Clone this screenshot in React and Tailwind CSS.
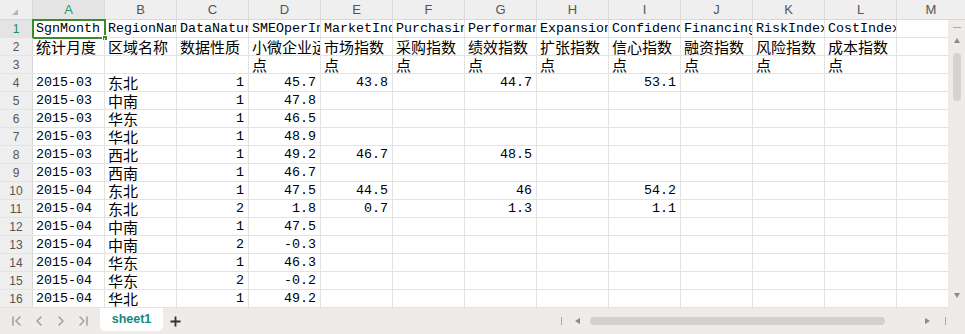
import React from 'react';

const COLS = ['A', 'B', 'C', 'D', 'E', 'F', 'G', 'H', 'I', 'J', 'K', 'L'];

const head = ['SgnMonth', 'RegionName', 'DataNature', 'SMEOperIndex', 'MarketIndex', 'PurchasingIndex', 'PerformanceIndex', 'ExpansionIndex', 'ConfidenceIndex', 'FinancingIndex', 'RiskIndex', 'CostIndex'];
const cn = ['统计月度', '区域名称', '数据性质', '小微企业运行指数', '市场指数', '采购指数', '绩效指数', '扩张指数', '信心指数', '融资指数', '风险指数', '成本指数'];
const unit = ['', '', '', '点', '点', '点', '点', '点', '点', '点', '点', '点'];

const data = [
  ['2015-03', '东北', '1', '45.7', '43.8', '', '44.7', '', '53.1'],
  ['2015-03', '中南', '1', '47.8'],
  ['2015-03', '华东', '1', '46.5'],
  ['2015-03', '华北', '1', '48.9'],
  ['2015-03', '西北', '1', '49.2', '46.7', '', '48.5'],
  ['2015-03', '西南', '1', '46.7'],
  ['2015-04', '东北', '1', '47.5', '44.5', '', '46', '', '54.2'],
  ['2015-04', '东北', '2', '1.8', '0.7', '', '1.3', '', '1.1'],
  ['2015-04', '中南', '1', '47.5'],
  ['2015-04', '中南', '2', '-0.3'],
  ['2015-04', '华东', '1', '46.3'],
  ['2015-04', '华东', '2', '-0.2'],
  ['2015-04', '华北', '1', '49.2'],
];

const Cell = ({ v = '', right }) => {
  const cjk = /[\u4e00-\u9fff]/.test(v);
  return (
    <div
      className={`w-[72px] h-full shrink-0 border-r border-[#e3e3e3] overflow-hidden whitespace-nowrap flex items-center ${right ? 'justify-end pr-[4px]' : 'pl-[3px]'}`}
    >
      <span
        className={cjk
          ? "text-[15px] leading-none text-black font-['Noto_Sans_CJK_SC',sans-serif]"
          : "text-[13.33px] leading-none text-black font-['Liberation_Mono',monospace]"}
      >
        {v}
      </span>
    </div>
  );
};

const Row = ({ n, cells, rightFrom = 99, selected, children }) => (
  <div className="relative flex h-[18px] border-b border-[#e3e3e3]">
    <div
      className={`w-[33px] shrink-0 border-r border-[#d8d8d8] flex items-center justify-center text-[12px] font-['Liberation_Sans',sans-serif] ${selected ? 'bg-[#e4e4e4] text-[#1f8a5c]' : 'bg-[#efefef] text-[#555]'}`}
    >
      {n}
    </div>
    {COLS.map((c, i) => (
      <Cell key={c} v={cells[i] || ''} right={i >= rightFrom} />
    ))}
    <div className="w-[51px] shrink-0" />
    {children}
  </div>
);

const Tri = ({ dir, className }) => {
  const pts = {
    up: '0,5 3,0 6,5',
    down: '0,0 6,0 3,5',
    left: '5,0 5,6 0,3',
    right: '0,0 0,6 5,3',
  }[dir];
  return (
    <svg width="6" height="6" viewBox="0 0 6 6" className={className}>
      <polygon points={pts} fill="#8a8a8a" />
    </svg>
  );
};

const NavIcon = ({ kind }) => (
  <div className="w-[22px] flex items-center justify-center">
    <svg width="12" height="12" viewBox="0 0 12 12" fill="none" stroke="#a3a3a3" strokeWidth="1.6" strokeLinecap="round" strokeLinejoin="round">
      {kind === 'first' && (<><path d="M2 2v8" /><path d="M9 2 5 6l4 4" /></>)}
      {kind === 'prev' && <path d="M8 2 4 6l4 4" />}
      {kind === 'next' && <path d="M4 2l4 4-4 4" />}
      {kind === 'last' && (<><path d="M3 2l4 4-4 4" /><path d="M10 2v8" /></>)}
    </svg>
  </div>
);

export default function App() {
  return (
    <div className="w-[965px] h-[334px] bg-white overflow-hidden flex flex-col select-none">
      {/* column headers */}
      <div className="flex h-[20px] shrink-0 bg-[#efefef] border-b border-[#d8d8d8]">
        <div className="w-[33px] shrink-0 border-r border-[#d8d8d8] flex items-end justify-end pr-[14px] pb-[4px]">
          <svg width="6" height="6" viewBox="0 0 6 6">
            <polygon points="6,0 6,6 0,6" fill="#b5b5b5" />
          </svg>
        </div>
        {COLS.map((c, i) => (
          <div
            key={c}
            className={`w-[72px] shrink-0 border-r border-[#dadada] flex items-center justify-center text-[13px] font-['Liberation_Sans',sans-serif] ${i === 0 ? 'bg-[#e4e4e4] text-[#1f9a66]' : 'text-[#555]'}`}
          >
            {c}
          </div>
        ))}
        <div className="flex-1 flex items-center justify-center text-[13px] text-[#555] font-['Liberation_Sans',sans-serif]">M</div>
      </div>

      {/* body */}
      <div className="flex h-[288px] shrink-0">
        <div className="w-[948px] shrink-0">
          <Row n={1} cells={head} selected>
            <div className="absolute left-[32px] top-[-1px] w-[74px] h-[20px] border-2 border-[#3b8a2d] pointer-events-none" />
            <div className="absolute left-[102px] top-[15px] w-[6px] h-[6px] bg-[#3b8a2d] border border-white" />
          </Row>
          <Row n={2} cells={cn} />
          <Row n={3} cells={unit} />
          {data.map((r, i) => (
            <Row key={i} n={i + 4} cells={r} rightFrom={2} />
          ))}
        </div>
        {/* vertical scrollbar */}
        <div className="flex-1 bg-[#eeebe9] flex flex-col items-center">
          <div className="mt-[7px] w-[8px] h-[1px] bg-[#a8a8a8]" />
          <Tri dir="up" className="mt-[10px]" />
          <div className="mt-[9px] w-[8px] h-[48px] rounded-full bg-[#d5d2d0]" />
          <Tri dir="down" className="mt-auto mb-[9px]" />
        </div>
      </div>

      {/* sheet bar */}
      <div className="flex-1 bg-[#eeebe9] flex items-center">
        <div className="w-[100px] shrink-0 flex pl-[6px]">
          <NavIcon kind="first" />
          <NavIcon kind="prev" />
          <NavIcon kind="next" />
          <NavIcon kind="last" />
        </div>
        <div className="self-start w-[63px] h-[23px] bg-white rounded-b-[5px] flex items-center justify-center text-[12.5px] font-bold text-[#12897d] font-['Liberation_Sans',sans-serif]">
          sheet1
        </div>
        <div className="ml-[6px] w-[12px] flex items-center justify-center">
          <svg width="11" height="11" viewBox="0 0 11 11" stroke="#333" strokeWidth="1.8">
            <path d="M5.5 0.5v10M0.5 5.5h10" />
          </svg>
        </div>
        <div className="flex-1" />
        <div className="flex items-center mr-[19px]">
          <div className="w-[1px] h-[8px] bg-[#a8a8a8]" />
          <Tri dir="left" className="ml-[13px]" />
          <div className="ml-[9px] w-[295px] h-[8px] rounded-full bg-[#d3d0ce]" />
          <Tri dir="right" className="ml-[40px]" />
          <div className="ml-[14px] w-[1px] h-[8px] bg-[#a8a8a8]" />
        </div>
      </div>
    </div>
  );
}
